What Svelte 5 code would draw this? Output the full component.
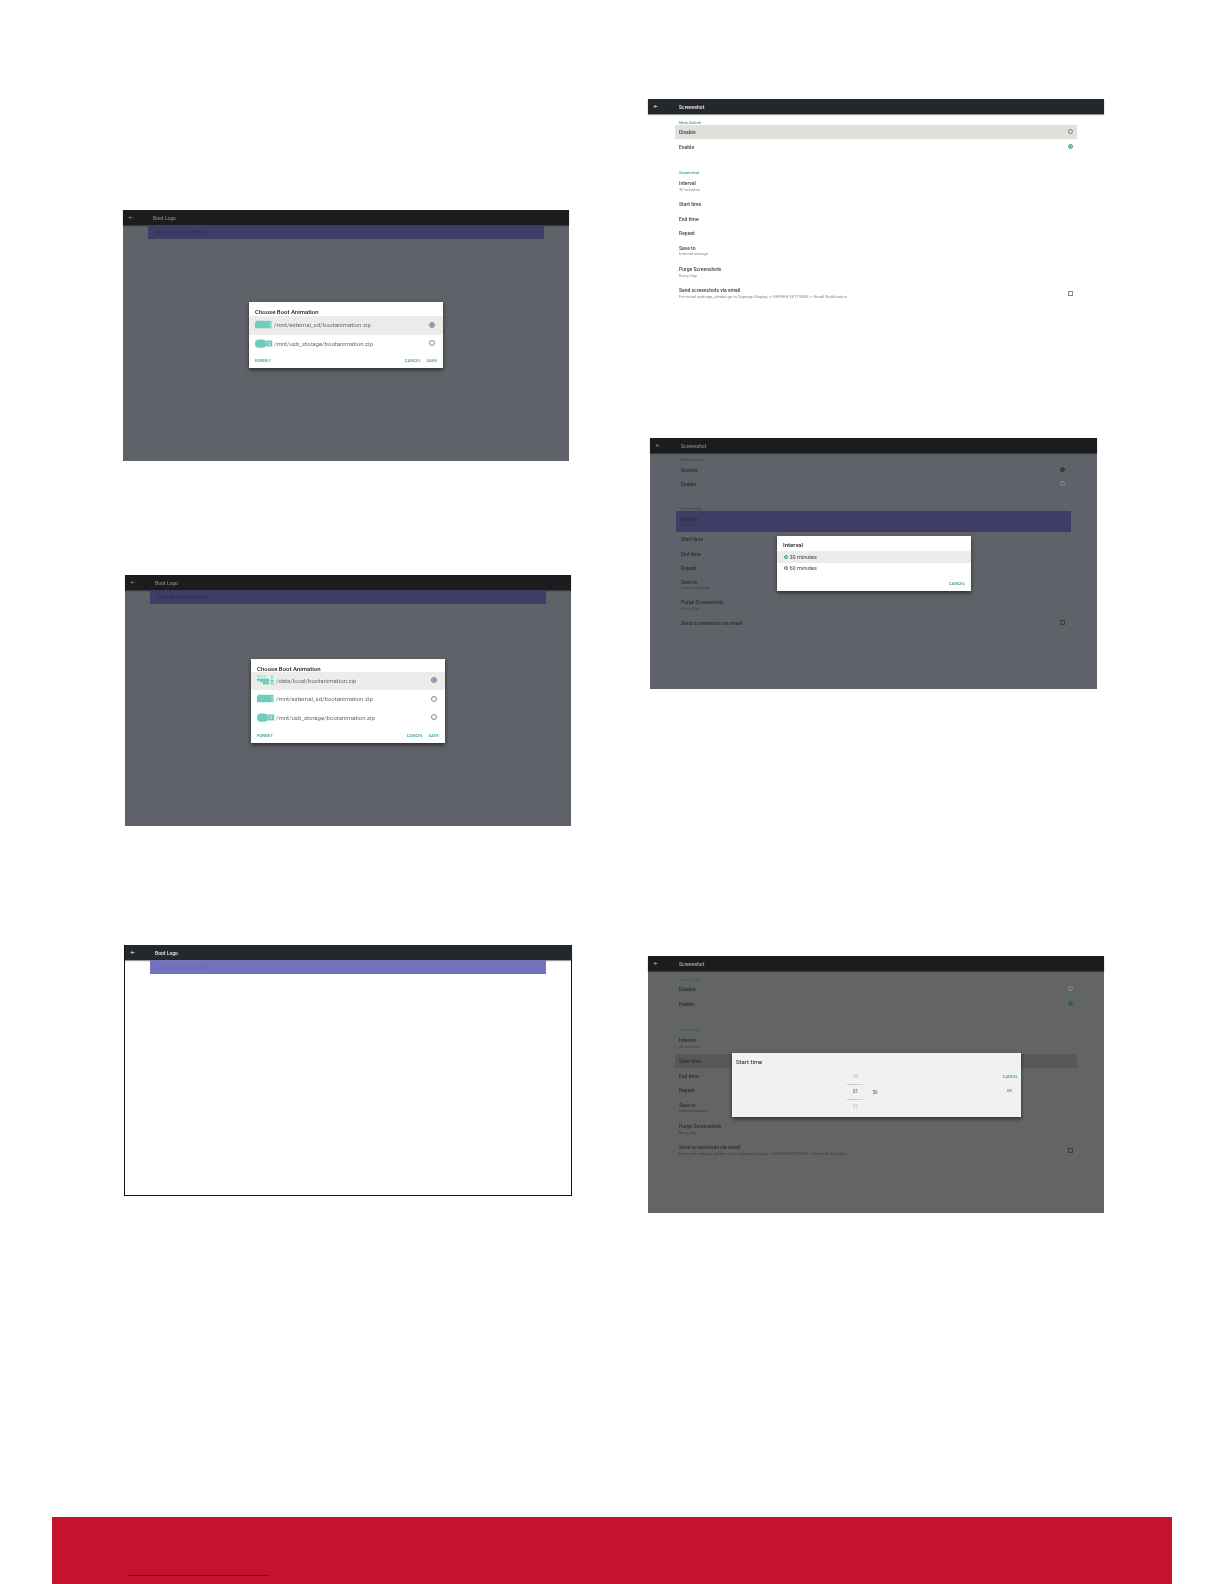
<script>
  const bootTwo = [
    { path: '/mnt/external_sd/bootanimation.zip', icon: 'sd', on: true },
    { path: '/mnt/usb_storage/bootanimation.zip', icon: 'usb', on: false }
  ];
  const bootThree = [
    { path: '/data/local/bootanimation.zip', icon: 'data', on: true },
    { path: '/mnt/external_sd/bootanimation.zip', icon: 'sd', on: false },
    { path: '/mnt/usb_storage/bootanimation.zip', icon: 'usb', on: false }
  ];

  // rows of the screenshot settings page
  const settings = [
    { title: 'Interval', sub: '30 minutes' },
    { title: 'Start time' },
    { title: 'End time' },
    { title: 'Repeat' },
    { title: 'Save to', sub: 'Internal storage' },
    { title: 'Purge Screenshots', sub: 'Every Day' },
    { title: 'Send screenshots via email', sub: 'For email settings, please go to Signage Display -> SERVER SETTINGS -> Email Notification', check: true }
  ];
  const intervalRows = settings.map((s, i) =>
    i === 6 ? { title: s.title, check: true } : s
  );
</script>

{#snippet header(title)}
  <div class="bar">
    <svg class="back" viewBox="0 0 10 10"><path d="M9 5H2M5 2L2 5l3 3" fill="none" stroke="currentColor" stroke-width="1.4" /></svg>
    <span>{title}</span>
  </div>
{/snippet}

{#snippet fileIcon(kind)}
  <svg class="file-icon" class:data={kind === 'data'} viewBox="0 0 24 12">
    {#if kind === 'sd'}
      <path d="M2 1h20v10H0V3z" fill="#6fcdbd" />
      <path d="M20 3v1.500M20 6v1.500M20 9v1" stroke="#fff" stroke-width="1" />
    {:else if kind === 'usb'}
      <rect x="0" y="0.500" width="15" height="11" rx="5" fill="#6fcdbd" />
      <rect x="15" y="2" width="8" height="8" fill="#6fcdbd" />
      <path d="M18 4h2v1h-2zM18 7h2v1h-2z" fill="#fff" />
    {:else}
      <path d="M1 0h2v2H1zM5 0h2v2H5zM9 0h2v2H9zM0 4h12v3H0zM4 7h8v2H4zM8 4h8v8H8z" fill="#6fcdbd" />
      <path d="M19 0h2v2h-2zM19 3h2v2h-2zM17 6h6l-3 4zM18 10h4v2h-4z" fill="#6fcdbd" />
    {/if}
  </svg>
{/snippet}

{#snippet bootDialog(rows, cls)}
  <div class="dialog boot {cls}">
    <div class="dialog-title">Choose Boot Animation</div>
    {#each rows as row}
      <div class="boot-row" class:sel={row.on}>
        {@render fileIcon(row.icon)}
        <span class="path">{row.path}</span>
        <span class="radio" class:blue={row.on}></span>
      </div>
    {/each}
    <div class="actions">
      <span>FORGET</span>
      <span class="push">CANCEL</span>
      <span>SAVE</span>
    </div>
  </div>
{/snippet}

{#snippet settingsList(rows, hot, cls)}
  <div class="list {cls}">
    <div class="group-label first">Main Switch</div>
    <div class="row short" class:grey={hot === 'disable'}>
      <span class="row-text">Disable</span>
      <span class="radio small" class:cross={cls === 'interval'}></span>
    </div>
    <div class="row short">
      <span class="row-text">Enable</span>
      <span class="radio small" class:green={cls !== 'interval'}></span>
    </div>
    <div class="group-label second">Screenshot</div>
    {#each rows as s}
      <div class="row" class:tall={s.sub} class:purple={hot === s.title} class:grey={hot === 'row:' + s.title}>
        <div class="row-text">
          <div>{s.title}</div>
          {#if s.sub}<div class="sub">{s.sub}</div>{/if}
        </div>
        {#if s.check}<span class="check"></span>{/if}
      </div>
    {/each}
  </div>
{/snippet}

<div class="page">
  <div class="columns">
    <div class="col">
      <section class="screen dim s1">
        {@render header('Boot Logo')}
        <div class="band"><span>Choose boot animation</span></div>
        {@render bootDialog(bootTwo, 'two')}
      </section>

      <section class="screen dim s2">
        {@render header('Boot Logo')}
        <div class="band"><span>Choose boot animation</span></div>
        {@render bootDialog(bootThree, 'three')}
      </section>

      <section class="screen s3">
        {@render header('Boot Logo')}
        <div class="band"><span>Choose boot animation</span></div>
      </section>
    </div>

    <div class="col right">
      <section class="screen s4">
        {@render header('Screenshot')}
        {@render settingsList(settings, 'disable', 'live')}
      </section>

      <section class="screen dim s5">
        {@render header('Screenshot')}
        {@render settingsList(intervalRows, 'Interval', 'interval')}
        <div class="dialog interval-box">
          <div class="dialog-title">Interval</div>
          <div class="opt sel"><span class="radio tiny green"></span>30 minutes</div>
          <div class="opt"><span class="radio tiny"></span>60 minutes</div>
          <div class="actions end"><span>CANCEL</span></div>
        </div>
      </section>

      <section class="screen dim s6">
        {@render header('Screenshot')}
        {@render settingsList(settings, 'row:Start time', 'dim-x')}
        <div class="dialog time-box">
          <div class="dialog-title">Start time</div>
          <div class="time-body">
            <div class="picker">
              <div class="spin">
                <span class="faint">00</span>
                <span class="cur">01</span>
                <span class="faint">02</span>
              </div>
              <span class="min">56</span>
            </div>
            <div class="time-actions">
              <span>CANCEL</span>
              <span class="ok">OK</span>
            </div>
          </div>
        </div>
      </section>
    </div>
  </div>

  <footer class="foot">
    <span class="link"></span>
  </footer>
</div>

<style>
  :global(body) {
    margin: 0;
    background: #fff;
  }

  .page {
    width: 1224px;
    height: 1584px;
    display: flex;
    flex-direction: column;
    font-family: Roboto, "Liberation Sans", sans-serif;
    color: #333;
    overflow: hidden;
  }

  .columns {
    flex: 1;
    display: flex;
  }

  .col {
    width: 648px;
    display: flex;
    flex-direction: column;
  }

  .col.right {
    width: 460px;
  }

  .screen {
    position: relative;
    background: #fff;
    font-size: 5px;
    filter: blur(0.5px);
  }

  .screen.dim {
    background: #5f6268;
  }

  .s1 { width: 446px; height: 251px; margin: 210px 0 0 123px; }
  .s2 { width: 446px; height: 251px; margin: 114px 0 0 125px; }
  .s3 {
    width: 448px;
    height: 251px;
    margin: 119px 0 0 124px;
    box-sizing: border-box;
    border: 1px solid #111;
    border-top: 0;
  }
  .s4 { width: 456px; height: 230px; margin: 99px 0 0 0; }
  .s5 { width: 447px; height: 251px; margin: 109px 0 0 2px; }
  .s6 { width: 456px; height: 257px; margin: 267px 0 0 0; }
  .screen.dim.s6 { background: #636464; }

  .bar {
    height: 15px;
    display: flex;
    align-items: center;
    background: #24282b;
    color: #eee;
    font-size: 5px;
    font-weight: 500;
    box-shadow: 0 1px 1px rgba(0, 0, 0, 0.4);
  }

  .dim .bar {
    background: #1a1c1e;
    color: #83858a;
  }

  .dim.s6 .bar {
    color: #b0b0b0;
  }

  .s3 .bar {
    margin: 0 -1px 0 0;
  }

  .back {
    width: 5px;
    height: 5px;
    margin: 0 20px 0 5px;
  }

  .s4 .bar span, .s5 .bar span, .s6 .bar span {
    margin-left: 1px;
  }

  .band {
    height: 14px;
    margin: 0 25px;
    padding-left: 8px;
    background: #7472bd;
    display: flex;
    align-items: center;
    color: #6a68b4;
  }

  .dim .band {
    background: #3f3d66;
    color: #2c2b45;
  }

  .dialog {
    position: absolute;
    background: #fff;
    box-shadow: 0 2px 4px rgba(0, 0, 0, 0.55);
    box-sizing: border-box;
  }

  .dialog-title {
    font-size: 6px;
    font-weight: 500;
    color: #222;
  }

  .boot {
    left: 126px;
    width: 194px;
  }

  .boot.two { top: 92px; height: 66px; }
  .boot.three { top: 84px; height: 84px; }

  .boot .dialog-title {
    padding: 5.500px 6px 0;
    height: 8.500px;
  }

  .boot.three .dialog-title {
    height: 7px;
  }

  .boot-row {
    height: 18.500px;
    display: flex;
    align-items: center;
    padding: 0 8px 1px 6px;
    box-sizing: border-box;
    font-size: 6px;
    color: #6b6b6b;
  }

  .boot-row.sel {
    background: #eeecea;
  }

  .file-icon {
    width: 18px;
    height: 9px;
    margin-right: 1px;
  }

  .file-icon.data {
    height: 12px;
  }

  .path {
    flex: 1;
  }

  .radio {
    box-sizing: border-box;
    width: 6px;
    height: 6px;
    border: 0.6px solid #808080;
    border-radius: 50%;
    flex: none;
  }

  .radio.blue {
    background: #4a7fb5;
    border-color: #4a7fb5;
    box-shadow: inset 0 0 0 0.6px #fff;
  }

  .radio.small {
    width: 5px;
    height: 5px;
  }

  .radio.green {
    background: #3fa886;
    border-color: #3fa886;
    box-shadow: inset 0 0 0 0.5px #fff;
  }

  .dim-x .radio.green {
    background: #2f5e50;
    border-color: #2f5e50;
    box-shadow: none;
  }

  .dim .radio {
    border-color: #8a8c90;
  }

  .radio.cross,
  .dim .radio.cross {
    border-color: #333;
    background: #3d3f43;
  }

  .dialog .radio.tiny {
    width: 4px;
    height: 4px;
    margin-right: 1.500px;
    border-color: #666;
  }

  .dialog .radio.tiny.green {
    border-color: #3fa886;
  }

  .actions {
    display: flex;
    padding: 5px 6px 0;
    gap: 5.500px;
    font-size: 4.300px;
    font-weight: 500;
    color: #2f9c84;
  }

  .boot.three .actions {
    padding-top: 6px;
  }

  .push {
    margin-left: auto;
  }

  .actions.end {
    justify-content: flex-end;
    padding: 7px 6px 0;
  }

  .list {
    font-size: 5px;
    color: #444;
    font-weight: 500;
  }

  .group-label {
    font-size: 4px;
    color: #35a884;
    padding-left: 31px;
    height: 5px;
    line-height: 5px;
  }

  .group-label.first {
    padding-top: 5.500px;
  }

  .group-label.second {
    padding-top: 16.500px;
    margin-bottom: 0.800px;
  }

  .interval .group-label.first {
    padding-top: 4px;
  }

  .interval .group-label.second {
    padding-top: 15.200px;
  }

  .dim .group-label {
    color: #45484e;
  }

  .dim-x .group-label {
    color: #3f5f55;
  }

  .row {
    display: flex;
    align-items: center;
    justify-content: space-between;
    height: 14.500px;
    margin: 0 27px;
    padding: 0 4px 0 4px;
    box-sizing: border-box;
  }

  .row-text {
    align-self: flex-start;
    padding-top: 4.500px;
  }

  .row.tall {
    height: 21.200px;
  }

  .interval .row {
    height: 14.200px;
    padding-right: 5px;
  }

  .interval .row.tall {
    height: 20.500px;
  }

  .row.grey {
    background: #e2e0dd;
  }

  .dim .row {
    color: #2b2d30;
  }

  .dim .row.grey {
    background: #585858;
  }

  .row.purple {
    background: #3f3d66;
    margin: 0 26px;
    padding-left: 5px;
  }

  .sub {
    font-size: 4.200px;
    font-weight: 400;
    color: #888;
    margin-top: 0.500px;
  }

  .dim .sub {
    color: #3c3e42;
  }

  .check {
    width: 3.500px;
    height: 3.500px;
    border: 0.5px solid #888;
    flex: none;
  }

  .dim .check {
    border-color: #3a3c40;
  }

  .interval-box {
    left: 127px;
    top: 98px;
    width: 194px;
    height: 55px;
  }

  .interval-box .dialog-title {
    height: 15px;
    line-height: 17px;
    padding-left: 6px;
  }

  .opt {
    height: 11.500px;
    display: flex;
    align-items: center;
    padding-left: 7px;
    font-size: 5.500px;
    color: #444;
  }

  .opt.sel {
    background: #eeecea;
  }

  .time-box {
    left: 84px;
    top: 97px;
    width: 289px;
    height: 64px;
    background: #f1f1f1;
    display: flex;
    flex-direction: column;
  }

  .time-box .dialog-title {
    padding: 5px 4px 0;
    font-weight: 400;
    height: 9px;
  }

  .time-body {
    flex: 1;
    display: flex;
    position: relative;
    justify-content: center;
  }

  .picker {
    display: flex;
    align-items: center;
    gap: 9px;
    margin-right: 28px;
    font-size: 4.500px;
    color: #555;
  }

  .spin {
    display: flex;
    flex-direction: column;
    align-items: center;
    width: 16px;
  }

  .spin span {
    height: 14px;
    line-height: 14px;
  }

  .spin .cur {
    width: 16px;
    text-align: center;
    border-top: 0.7px solid #ccc;
    border-bottom: 0.7px solid #ccc;
  }

  .faint {
    color: #bbb;
  }

  .time-actions {
    position: absolute;
    right: 3px;
    top: 7px;
    display: flex;
    flex-direction: column;
    align-items: flex-end;
    gap: 9px;
    font-size: 4px;
    font-weight: 500;
    color: #35a884;
  }

  .ok {
    margin-right: 6px;
  }

  .foot {
    flex: none;
    height: 67px;
    margin: 0 52px;
    background: #c4122f;
    position: relative;
  }

  .link {
    display: block;
    width: 142px;
    height: 1.300px;
    margin: 58px 0 0 75px;
    background: #4a08a8;
  }
</style>
